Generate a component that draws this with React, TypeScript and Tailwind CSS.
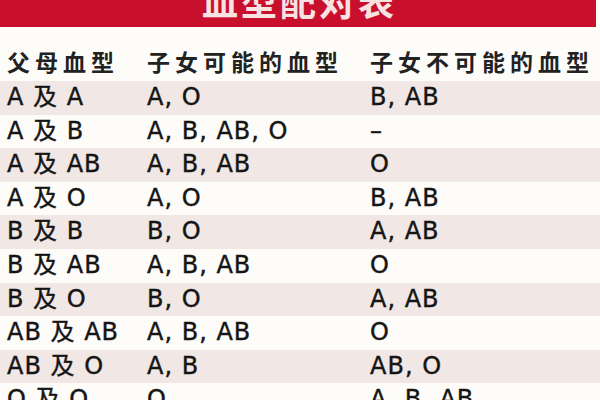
import React from "react"

const ROWS: [string, string, string, string][] = [
  ["A", "A", "A, O", "B, AB"],
  ["A", "B", "A, B, AB, O", "–"],
  ["A", "AB", "A, B, AB", "O"],
  ["A", "O", "A, O", "B, AB"],
  ["B", "B", "B, O", "A, AB"],
  ["B", "AB", "A, B, AB", "O"],
  ["B", "O", "B, O", "A, AB"],
  ["AB", "AB", "A, B, AB", "O"],
  ["AB", "O", "A, B", "AB, O"],
  ["O", "O", "O", "A, B, AB"],
]

const cjk = "font-['Noto_Sans_CJK_SC','Noto_Sans',sans-serif]"
const latin = "font-['DejaVu_Sans','Noto_Sans_CJK_SC',sans-serif]"

export default function App() {
  return (
    <div className="w-[600px] h-[400px] overflow-hidden bg-[#fdfcf9] text-[#1c1c1c]">
      {/* Title band */}
      <div className="w-[596px] h-[27px] bg-[#c80f2c] overflow-hidden flex justify-center">
        <h1
          className={`${cjk} text-[36px] leading-[36px] font-bold tracking-[3px] text-[#f8e2e2] mt-[-18px] pl-[3px]`}
        >
          血型配对表
        </h1>
      </div>

      {/* Column headers */}
      <div
        className={`${cjk} grid grid-cols-[140px_223px_1fr] pl-[7px] h-[54px] items-center pt-[14px] text-[23px] font-bold tracking-[5px] text-[#222] whitespace-nowrap`}
      >
        <span>父母血型</span>
        <span>子女可能的血型</span>
        <span>子女不可能的血型</span>
      </div>

      {/* Data rows */}
      <div
        className={`${latin} text-[24px] tracking-[1px] whitespace-nowrap text-[#151515] [-webkit-text-stroke:0.4px_#151515]`}
      >
        {ROWS.map(([a, b, can, cannot], i) => (
          <div
            key={i}
            className={`grid grid-cols-[140px_223px_1fr] pl-[7px] h-[33.6px] leading-[33.6px] ${
              i % 2 === 0 ? "bg-[#f1e7e4]" : "bg-[#fdfcf9]"
            }`}
          >
            <span>
              {a} 及 {b}
            </span>
            <span>{can}</span>
            <span>{cannot}</span>
          </div>
        ))}
      </div>
    </div>
  )
}
